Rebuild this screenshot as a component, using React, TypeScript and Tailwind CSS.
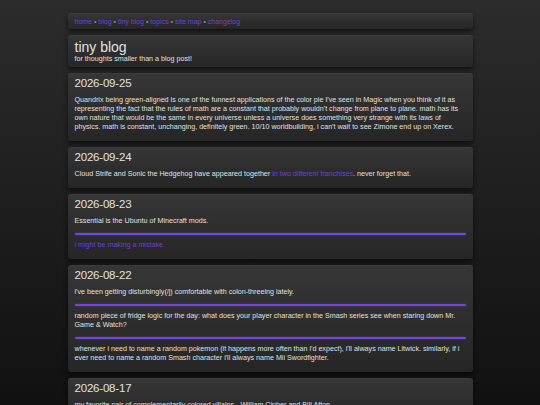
import React from "react";

const font = { fontFamily: '"Liberation Sans", Arial, sans-serif' };

const Link: React.FC<{ children: React.ReactNode }> = ({ children }) => (
  <a href="#" className="text-[#6c3fd6] no-underline">
    {children}
  </a>
);

const Rule: React.FC = () => (
  <div className="my-[6.5px] h-[2px] rounded-full bg-[#7346dc] shadow-[0_0_2px_rgba(115,70,220,0.6)]" />
);

const Card: React.FC<{ children: React.ReactNode; className?: string }> = ({
  children,
  className = "",
}) => (
  <section
    className={
      "rounded-[3px] border-t border-[#3d3d3d] bg-gradient-to-b from-[#363636] to-[#262626] px-[7px] shadow-[0_3px_5px_rgba(0,0,0,0.55)] " +
      className
    }
  >
    {children}
  </section>
);

const Post: React.FC<{ date: string; children: React.ReactNode }> = ({
  date,
  children,
}) => (
  <Card className="pt-[3px] pb-[3px]">
    <h2 className="text-[11.5px] leading-[13px] font-light tracking-[-0.2px] text-[#e2e2e2]">
      {date}
    </h2>
    <div className="mt-[6px] mb-[6px] flex flex-col text-[7.15px] leading-[9px] text-[#e0e0e0]">
      {children}
    </div>
  </Card>
);

export default function App() {
  const nav = ["home", "blog", "tiny blog", "topics", "site map", "changelog"];

  return (
    <div
      className="min-h-screen bg-gradient-to-b from-[#2c2c2c] to-[#111111] bg-fixed pt-[13px] pb-[20px]"
      style={font}
    >
      <div className="mx-auto flex w-[405px] flex-col gap-[6px]">
        <Card className="py-[3px]">
          <nav className="text-[7px] leading-[9px] text-[#8a8a8a]">
            {nav.map((item, i) => (
              <span key={item}>
                {i > 0 && " • "}
                <Link>{item}</Link>
              </span>
            ))}
          </nav>
        </Card>

        <Card className="pt-[3px] pb-[3px]">
          <h1 className="text-[14px] leading-[16px] font-light text-[#e2e2e2]">
            tiny blog
          </h1>
          <p className="text-[7.15px] leading-[9px] text-[#e0e0e0]">
            for thoughts smaller than a blog post!
          </p>
        </Card>

        <Post date="2026-09-25">
          <p>
            Quandrix being green-aligned is one of the funnest applications of
            the color pie I've seen in Magic when you think of it as
            representing the fact that the rules of math are a constant that
            probably wouldn't change from plane to plane. math has its own
            nature that would be the same in every universe unless a universe
            does something very strange with its laws of physics. math is
            constant, unchanging, definitely green. 10/10 worldbuilding, i can't
            wait to see Zimone end up on Xerex.
          </p>
        </Post>

        <Post date="2026-09-24">
          <p>
            Cloud Strife and Sonic the Hedgehog have appeared together{" "}
            <Link>in two different franchises</Link>. never forget that.
          </p>
        </Post>

        <Post date="2026-08-23">
          <p>Essential is the Ubuntu of Minecraft mods.</p>
          <Rule />
          <p>
            <Link>i might be making a mistake.</Link>
          </p>
        </Post>

        <Post date="2026-08-22">
          <p>
            i've been getting disturbingly(/j) comfortable with colon-threeing
            lately.
          </p>
          <Rule />
          <p>
            random piece of fridge logic for the day: what does your player
            character in the Smash series see when staring down Mr. Game &amp;
            Watch?
          </p>
          <Rule />
          <p>
            whenever i need to name a random pokemon (it happens more often than
            i'd expect), i'll always name Litwick. similarly, if i ever need to
            name a random Smash character i'll always name Mii Swordfighter.
          </p>
        </Post>

        <Post date="2026-08-17">
          <p>
            my favorite pair of complementarily colored villains - William
            Cipher and Bill Afton.
          </p>
        </Post>
      </div>
    </div>
  );
}
